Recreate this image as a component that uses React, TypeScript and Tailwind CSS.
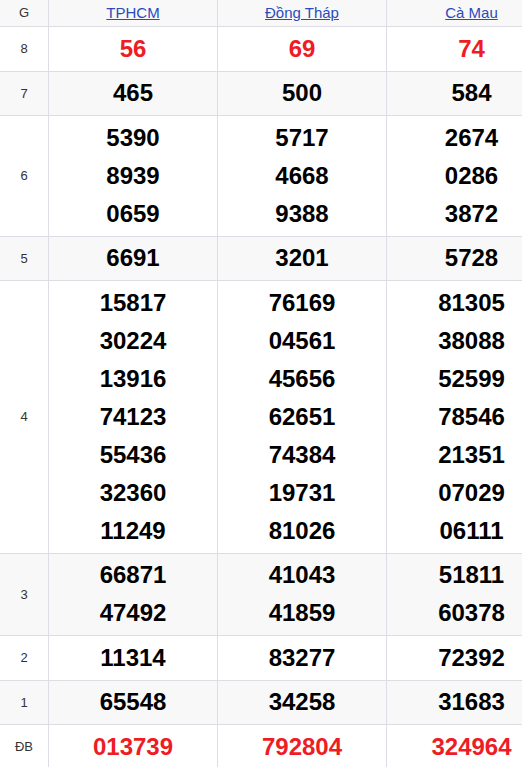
import React from "react";

type Row = {
  label: string;
  values: string[][];
  red?: boolean;
};

const provinces = ["TPHCM", "Đồng Tháp", "Cà Mau"];

const rows: Row[] = [
  { label: "8", values: [["56"], ["69"], ["74"]], red: true },
  { label: "7", values: [["465"], ["500"], ["584"]] },
  {
    label: "6",
    values: [
      ["5390", "8939", "0659"],
      ["5717", "4668", "9388"],
      ["2674", "0286", "3872"],
    ],
  },
  { label: "5", values: [["6691"], ["3201"], ["5728"]] },
  {
    label: "4",
    values: [
      ["15817", "30224", "13916", "74123", "55436", "32360", "11249"],
      ["76169", "04561", "45656", "62651", "74384", "19731", "81026"],
      ["81305", "38088", "52599", "78546", "21351", "07029", "06111"],
    ],
  },
  {
    label: "3",
    values: [
      ["66871", "47492"],
      ["41043", "41859"],
      ["51811", "60378"],
    ],
  },
  { label: "2", values: [["11314"], ["83277"], ["72392"]] },
  { label: "1", values: [["65548"], ["34258"], ["31683"]] },
  { label: "ĐB", values: [["013739"], ["792804"], ["324964"]], red: true },
];

export default function App() {
  return (
    <div
      className="w-[522px] h-[767px] overflow-hidden bg-white"
      style={{ fontFamily: '"Liberation Sans", Arial, sans-serif' }}
    >
      <div className="w-[556px]">
        {/* Header */}
        <div className="grid grid-cols-[49px_169px_169px_169px] h-[27px] bg-[#f8f8f8] border-b border-[#dddde3]">
          <div className="flex items-center justify-center border-r border-[#dddde3] text-[13px] text-[#333]">
            G
          </div>
          {provinces.map((p) => (
            <div
              key={p}
              className="flex items-center justify-center border-r border-[#dddde3] last:border-r-0"
            >
              <a href="#" className="text-[15px] text-[#2a4bbd] underline">
                {p}
              </a>
            </div>
          ))}
        </div>

        {rows.map((row, i) => (
          <div
            key={row.label}
            className={`grid grid-cols-[49px_169px_169px_169px] border-b border-[#dddde3] ${
              i % 2 === 1 ? "bg-[#f8f8f8]" : "bg-white"
            }`}
          >
            <div className="flex items-center justify-center border-r border-[#dddde3] text-[13px] text-[#333]">
              {row.label}
            </div>
            {row.values.map((col, j) => (
              <div
                key={j}
                className="flex flex-col items-center justify-center py-[2.75px] border-r border-[#dddde3] last:border-r-0"
              >
                {col.map((n, k) => (
                  <div
                    key={k}
                    className={`text-[24px] leading-[38px] font-bold ${
                      row.red ? "text-[#ee1c25]" : "text-black"
                    }`}
                  >
                    {n}
                  </div>
                ))}
              </div>
            ))}
          </div>
        ))}
      </div>
    </div>
  );
}
